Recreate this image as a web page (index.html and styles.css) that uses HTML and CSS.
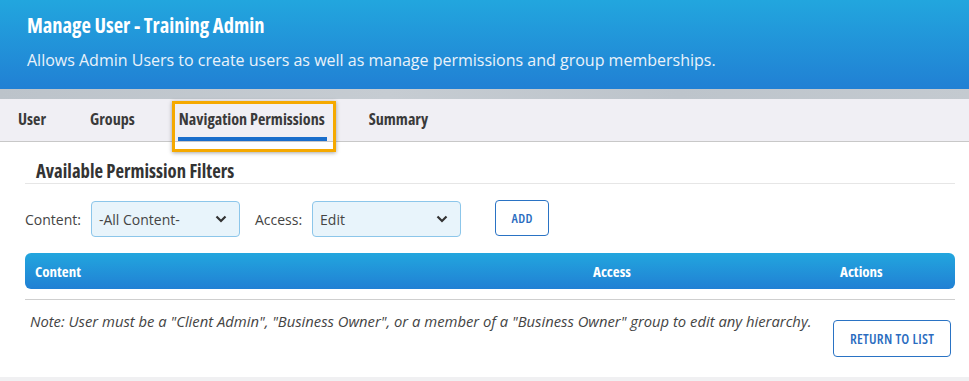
FILE: index.html
```html
<!DOCTYPE html>
<html lang="en">
<head>
  <meta charset="UTF-8" />
  <title>Manage User - Training Admin</title>
  <link rel="stylesheet" href="styles.css">
</head>
<body>
  <header class="page-head">
    <h1 class="page-title">Manage User - Training Admin</h1>
    <p class="page-desc">Allows Admin Users to create users as well as manage permissions and group memberships.</p>
  </header>
  <div class="head-strip"></div>

  <nav class="tabs">
    <a class="tab">User</a>
    <a class="tab">Groups</a>
    <a class="tab active">Navigation Permissions<span class="focus-ring"></span></a>
    <a class="tab">Summary</a>
  </nav>

  <main class="panel">
    <h2 class="section-title">Available Permission Filters</h2>

    <div class="filters">
      <label class="filter-label">Content:</label>
      <div class="select">
        <span>-All Content-</span>
        <svg width="12" height="8" viewBox="0 0 12 8"><path d="M1.5 1.5 L6 6 L10.5 1.5" fill="none" stroke="#333" stroke-width="2.2"/></svg>
      </div>
      <label class="filter-label">Access:</label>
      <div class="select">
        <span>Edit</span>
        <svg width="12" height="8" viewBox="0 0 12 8"><path d="M1.5 1.5 L6 6 L10.5 1.5" fill="none" stroke="#333" stroke-width="2.2"/></svg>
      </div>
      <button class="btn btn-add">ADD</button>
    </div>

    <div class="table-head">
      <div class="col-content">Content</div>
      <div class="col-access">Access</div>
      <div class="col-actions">Actions</div>
    </div>

    <div class="table-foot">
      <p class="note">Note: User must be a "Client Admin", "Business Owner", or a member of a "Business Owner" group to edit any hierarchy.</p>
      <button class="btn btn-return">RETURN TO LIST</button>
    </div>
  </main>
  <div class="page-bottom"></div>
</body>
</html>
```

FILE: styles.css
```css
body {
  margin: 0;
  background: #fff;
  font-family: 'Open Sans', 'Noto Sans', sans-serif;
  color: #444;
}
/* Header */
.page-head {
  height: 89px;
  box-sizing: border-box;
  padding: 11px 27px 0;
  background: linear-gradient(#22a6de, #2180d4);
  color: #fff;
}
.page-title {
  margin: 0;
  font-weight: bold;
  font-stretch: 75%;
  font-size: 20.5px;
  line-height: 28px;
}
.page-desc {
  margin: 10px 0 0;
  font-size: 16px;
  line-height: 22px;
  color: #eaf2fa;
}
.head-strip {
  height: 10px;
  background: linear-gradient(90deg, #bcc3ca, #c6ccd2 40%, #bdc4cb 70%, #c4cad0);
}
/* Tabs */
.tabs {
  display: flex;
  gap: 44px;
  height: 42px;
  padding-left: 18px;
  background: #f0eff4;
  border-bottom: 1px solid #c8c8c8;
}
.tab {
  position: relative;
  display: flex;
  align-items: center;
  font-weight: bold;
  font-stretch: 75%;
  font-size: 16.1px;
  color: #3a3a3a;
  padding-bottom: 2px;
}
.tab.active::after {
  content: '';
  position: absolute;
  left: -1px;
  right: -2px;
  bottom: 0;
  height: 4px;
  background: #1a6ecb;
}
.focus-ring {
  position: absolute;
  left: -7px;
  right: -11px;
  top: 2px;
  bottom: -11px;
  border: 3px solid #f5a900;
  box-shadow: 0 1px 4px rgba(0, 0, 0, 0.35);
}
/* Panel */
.panel {
  padding: 0 14px 0 25px;
}
.section-title {
  margin: 0;
  padding: 16px 0 0 11px;
  height: 25px;
  font-weight: bold;
  font-stretch: 75%;
  font-size: 18.7px;
  line-height: 26px;
  color: #333;
  border-bottom: 1px solid #e6e6e6;
}
.filters {
  display: flex;
  align-items: center;
  height: 36px;
  margin-top: 17px;
}
.filter-label {
  font-size: 14px;
  color: #444;
  margin-right: 10px;
}
.select {
  display: flex;
  align-items: center;
  justify-content: space-between;
  width: 149px;
  height: 36px;
  box-sizing: border-box;
  padding: 0 12px 0 7px;
  margin-right: 15px;
  background: #e8f4fb;
  border: 1px solid #8cc6ea;
  border-radius: 4px;
  font-size: 14px;
  color: #444;
}
.btn {
  background: #fff;
  border: 1px solid #2a73c4;
  border-radius: 4px;
  color: #2a6cc0;
  font-family: 'Open Sans', sans-serif;
  font-stretch: 75%;
  font-weight: 600;
  font-size: 13px;
  letter-spacing: 0.3px;
  cursor: pointer;
}
.btn-add {
  width: 54px;
  height: 36px;
  margin-left: 19px;
  margin-top: -2px;
}
/* Table */
.table-head {
  display: flex;
  align-items: center;
  height: 36px;
  margin-top: 16px;
  border-radius: 6px;
  background: linear-gradient(#22a6de, #2180d4);
  color: #fff;
  font-weight: bold;
  font-stretch: 75%;
  font-size: 15px;
}
.col-content {
  flex: 1;
  padding-left: 10px;
}
.col-access {
  width: 247px;
}
.col-actions {
  width: 115px;
}
.table-foot {
  display: flex;
  justify-content: space-between;
  align-items: flex-start;
  margin-top: 10px;
  padding-top: 11px;
  border-top: 1px solid #cfcfcf;
  height: 64px;
  box-sizing: border-box;
}
.note {
  margin: 0 0 0 5px;
  font-size: 14.8px;
  font-style: italic;
  color: #444;
}
.btn-return {
  width: 118px;
  height: 37px;
  margin-top: 9px;
  margin-right: 4px;
  font-size: 14px;
}
.page-bottom {
  height: 4px;
  margin-top: 14px;
  background: #f0f0f2;
}
```
